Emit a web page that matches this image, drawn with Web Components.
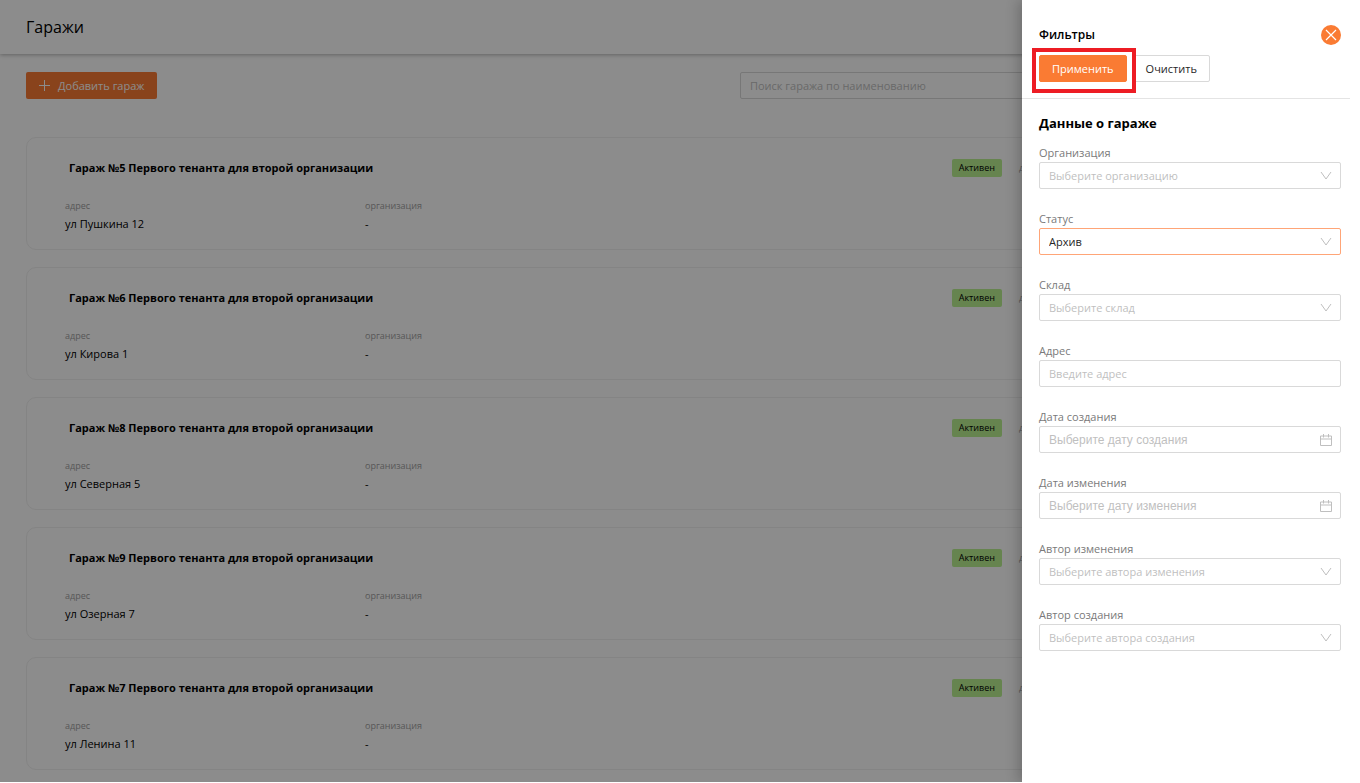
<!DOCTYPE html>
<html lang="ru">
<head>
  <meta charset="utf-8">
  <title>Гаражи</title>
  <style>
    html, body {
      height: 100%;
      margin: 0;
    }

    body {
      background: #fff;
      color: #000;
      font: 11px/18px "Open Sans", "Noto Sans", sans-serif;
      overflow: hidden;
    }
  </style>
</head>
<body>
  <garage-page>
    <page-header>Гаражи</page-header>
    <garage-toolbar></garage-toolbar>
    <garage-card name="Гараж №5 Первого тенанта для второй организации" address="ул Пушкина 12"></garage-card>
    <garage-card name="Гараж №6 Первого тенанта для второй организации" address="ул Кирова 1"></garage-card>
    <garage-card name="Гараж №8 Первого тенанта для второй организации" address="ул Северная 5"></garage-card>
    <garage-card name="Гараж №9 Первого тенанта для второй организации" address="ул Озерная 7"></garage-card>
    <garage-card name="Гараж №7 Первого тенанта для второй организации" address="ул Ленина 11"></garage-card>

    <filter-drawer slot="drawer" heading="Данные о гараже">
      <filter-field type="select" label="Организация" placeholder="Выберите организацию"></filter-field>
      <filter-field type="select" label="Статус" value="Архив"></filter-field>
      <filter-field type="select" label="Склад" placeholder="Выберите склад"></filter-field>
      <filter-field type="text" label="Адрес" placeholder="Введите адрес"></filter-field>
      <filter-field type="date" label="Дата создания" placeholder="Выберите дату создания"></filter-field>
      <filter-field type="date" label="Дата изменения" placeholder="Выберите дату изменения"></filter-field>
      <filter-field type="select" label="Автор изменения" placeholder="Выберите автора изменения"></filter-field>
      <filter-field type="select" label="Автор создания" placeholder="Выберите автора создания"></filter-field>
    </filter-drawer>
  </garage-page>

  <script>
    'use strict';

    (function() {
      class GaragePage extends HTMLElement {
        constructor() {
          super();
          const shadow = this.attachShadow({ mode: 'open' });
          shadow.innerHTML = `
            <style>
              :host {
                display: block;
                position: relative;
                height: calc(100vh - 1px);
                margin-right: 10px;
                overflow: hidden;
              }

              main {
                display: flex;
                flex-direction: column;
              }

              .mask {
                position: absolute;
                inset: 0;
                background: rgba(0, 0, 0, 0.45);
              }
            </style>
            <main><slot></slot></main>
            <div class="mask"></div>
            <slot name="drawer"></slot>
          `;
        }
      }

      class PageHeader extends HTMLElement {
        constructor() {
          super();
          const shadow = this.attachShadow({ mode: 'open' });
          shadow.innerHTML = `
            <style>
              :host {
                display: block;
                padding: 15px 26px;
                box-shadow: 0 1px 4px rgba(0, 0, 0, 0.3);
              }

              h1 {
                margin: 0;
                font-size: 16px;
                font-weight: 500;
                line-height: 24px;
              }
            </style>
            <h1><slot></slot></h1>
          `;
        }
      }

      class GarageToolbar extends HTMLElement {
        constructor() {
          super();
          const shadow = this.attachShadow({ mode: 'open' });
          shadow.innerHTML = `
            <style>
              :host {
                display: flex;
                justify-content: space-between;
                padding: 18px 26px 38px;
              }

              button {
                display: flex;
                align-items: center;
                gap: 8px;
                height: 27px;
                padding: 0 13px;
                border: 0;
                border-radius: 2px;
                background: #fa7b33;
                color: #fff;
                font: inherit;
              }

              input {
                box-sizing: border-box;
                width: 45%;
                height: 27px;
                padding: 0 9px;
                border: 1px solid #d9d9d9;
                border-radius: 2px;
                background: #fff;
                font: inherit;
              }

              input::placeholder {
                color: #bfbfbf;
              }
            </style>
            <button type="button">
              <svg width="11" height="11" viewBox="0 0 11 11" stroke="currentColor" aria-hidden="true"><path d="M5.5 0v11M0 5.5h11"/></svg>
              Добавить гараж
            </button>
            <input type="search" aria-label="Поиск гаража" placeholder="Поиск гаража по наименованию">
          `;
        }
      }

      class GarageCard extends HTMLElement {
        constructor() {
          super();
          const shadow = this.attachShadow({ mode: 'open' });
          shadow.innerHTML = `
            <style>
              :host {
                display: block;
                margin: 0 26px 17px;
                padding: 21px 38px 16px;
                border: 1px solid #f0f0f0;
                border-radius: 10px;
              }

              header {
                display: flex;
                align-items: center;
                margin-bottom: 20px;
              }

              h2 {
                flex: 1;
                margin: 0;
                padding-left: 4px;
                font-size: 11px;
                line-height: 18px;
              }

              .tag {
                padding: 0 7px;
                border-radius: 2px;
                background: #baf091;
                font-size: 9px;
              }

              .date {
                width: 266px;
                padding-left: 17px;
              }

              .caption {
                color: #a0a0a0;
                font-size: 9px;
              }

              dl {
                display: grid;
                grid-template-columns: 300px 1fr;
                margin: 0;
              }

              dd {
                margin: 0;
              }
            </style>
            <header>
              <h2>${this.getAttribute('name')}</h2>
              <span class="tag">Активен</span>
              <span class="date caption">дата</span>
            </header>
            <dl>
              <div><dt class="caption">адрес</dt><dd>${this.getAttribute('address')}</dd></div>
              <div><dt class="caption">организация</dt><dd>-</dd></div>
            </dl>
          `;
        }
      }

      class FilterDrawer extends HTMLElement {
        constructor() {
          super();
          const shadow = this.attachShadow({ mode: 'open' });
          shadow.innerHTML = `
            <style>
              :host {
                display: block;
                position: absolute;
                top: 0;
                right: 0;
                bottom: -1px;
                width: 328px;
                background: #fff;
                box-shadow: -4px 0 12px rgba(0, 0, 0, 0.2);
              }

              header {
                padding: 25px 9px 16px 17px;
                border-bottom: 1px solid #e4e4e4;
              }

              .title, .actions {
                display: flex;
                align-items: center;
              }

              .title {
                justify-content: space-between;
                margin-bottom: 10px;
              }

              h2, h3 {
                margin: 0;
                font-size: 12px;
                font-weight: 600;
                line-height: 20px;
              }

              h3 {
                margin-bottom: 10px;
                font-size: 13px;
                font-weight: 700;
              }

              button {
                height: 27px;
                padding: 0 12px;
                border: 1px solid #d9d9d9;
                border-radius: 2px;
                background: #fff;
                color: #262626;
                font: inherit;
              }

              .close {
                display: flex;
                width: 20px;
                height: 20px;
                padding: 0;
                border: 0;
                border-radius: 50%;
                background: #fa7b33;
              }

              .actions {
                gap: 6px;
              }

              .apply {
                position: relative;
                border-color: #fa7b33;
                background: #fa7b33;
                color: #fff;
              }

              /* frame around the main action */
              .apply::after {
                content: "";
                position: absolute;
                inset: -8px -10px -12px -8px;
                border: 4px solid #ed1c24;
              }

              section {
                padding: 14px 9px 17px 17px;
              }

              .fields {
                display: flex;
                flex-direction: column;
                gap: 20px;
              }
            </style>
            <header>
              <div class="title">
                <h2>Фильтры</h2>
                <button class="close" type="button" aria-label="Закрыть">
                  <svg width="20" height="20" viewBox="0 0 20 20" fill="none" stroke="#fff" stroke-width="1.2"><path d="M5 5l10 10M15 5L5 15"/></svg>
                </button>
              </div>
              <div class="actions">
                <button class="apply" type="button">Применить</button>
                <button type="button">Очистить</button>
              </div>
            </header>
            <section>
              <h3>${this.getAttribute('heading')}</h3>
              <div class="fields"><slot></slot></div>
            </section>
          `;
        }
      }

      const chevron = '<svg width="12" height="12" viewBox="0 0 12 12"><path d="M1 2l5 7 5-7"/></svg>';
      const calendar = '<svg width="12" height="12" viewBox="0 0 12 12"><path d="M.5 2h11v9.500h-11zM.5 5h11M3.500 0v3.500M8.500 0v3.500"/></svg>';

      class FilterField extends HTMLElement {
        constructor() {
          super();
          const shadow = this.attachShadow({ mode: 'open' });
          shadow.innerHTML = `
            <style>
              :host {
                display: block;
              }

              label {
                display: block;
                color: #7a7a7a;
                line-height: 19px;
              }

              .control {
                display: flex;
                position: relative;
              }

              input, select {
                appearance: none;
                box-sizing: border-box;
                width: 100%;
                height: 27px;
                padding: 0 30px 0 9px;
                border: 1px solid #d9d9d9;
                border-radius: 2px;
                background: #fff;
                color: #262626;
                font: inherit;
              }

              .date {
                font-family: "Liberation Sans", Arial, sans-serif;
                font-size: 12px;
              }

              select.empty, ::placeholder {
                color: #bfbfbf;
              }

              select.filled {
                border-color: #ffa577;
              }

              svg {
                position: absolute;
                top: 8px;
                right: 9px;
                fill: none;
                stroke: #bfbfbf;
                pointer-events: none;
              }
            </style>
            <label for="control">${this.getAttribute('label')}</label>
            <div class="control">${this.control}</div>
          `;
        }

        get control() {
          const type = this.getAttribute('type');
          const value = this.getAttribute('value');
          const placeholder = this.getAttribute('placeholder');

          if (type === 'select') {
            return `
              <select id="control" class="${value ? 'filled' : 'empty'}">
                <option>${value || placeholder}</option>
              </select>${chevron}
            `;
          }
          return `<input id="control" class="${type}" type="text" placeholder="${placeholder}">${type === 'date' ? calendar : ''}`;
        }
      }

      customElements.define('garage-page', GaragePage);
      customElements.define('page-header', PageHeader);
      customElements.define('garage-toolbar', GarageToolbar);
      customElements.define('garage-card', GarageCard);
      customElements.define('filter-drawer', FilterDrawer);
      customElements.define('filter-field', FilterField);
    })();
  </script>
</body>
</html>
